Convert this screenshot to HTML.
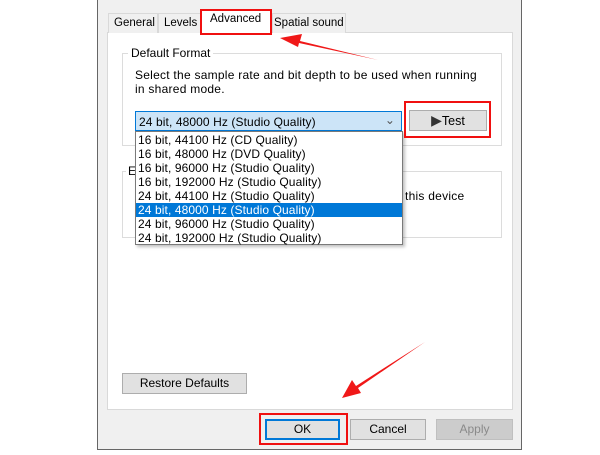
<!DOCTYPE html>
<html><head><style>
body{margin:0;width:600px;height:455px;background:#fff;position:relative;overflow:hidden;font-family:"Liberation Sans",sans-serif;font-size:12px;color:#000}
div{position:absolute;box-sizing:border-box;white-space:nowrap}
.btn{background:#e1e1e1;border:1px solid #adadad;text-align:center;line-height:19px}
.red{border:2px solid #f01010}
.tab{font-size:11.5px}
</style></head><body>
<div style="left:97px;top:-2px;width:425px;height:452px;background:#f0f0f0;border:1px solid #666"></div>
<div style="left:107px;top:32px;width:406px;height:378px;background:#fff;border:1px solid #d9d9d9"></div>
<div class="tab" style="left:108px;top:13px;width:50px;height:20px;border:1px solid #d9d9d9;border-bottom:none;background:#f0f0f0;padding:3px 0 0 5px">General</div>
<div class="tab" style="left:158px;top:13px;width:44px;height:20px;border:1px solid #d9d9d9;border-bottom:none;background:#f0f0f0;padding:3px 0 0 5px">Levels</div>
<div class="tab" style="left:202px;top:10px;width:70px;height:24px;background:#fff;padding:3px 0 0 8px">Advanced</div>
<div class="red" style="left:200px;top:9px;width:72px;height:26px"></div>
<div class="tab" style="left:272px;top:13px;width:74px;height:20px;border:1px solid #d9d9d9;border-bottom:none;background:#f0f0f0;padding:3px 0 0 1px">Spatial sound</div>
<div style="left:122px;top:53px;width:380px;height:93px;border:1px solid #dcdcdc"></div>
<div style="left:128px;top:46px;background:#fff;padding:0 3px">Default Format</div>
<div style="left:135px;top:68px;line-height:14px;font-size:12px;letter-spacing:0.25px">Select the sample rate and bit depth to be used when running<br>in shared mode.</div>
<div style="left:122px;top:171px;width:380px;height:67px;border:1px solid #dcdcdc"></div>
<div style="left:126px;top:164px;background:#fff;padding:0 2px">E</div>
<div style="left:405px;top:189px;font-size:12px;letter-spacing:0.25px">this device</div>
<div style="left:135px;top:111px;width:267px;height:20px;background:#cce4f7;border:1px solid #0078d7;padding:3px 0 0 3px;letter-spacing:0.1px">24 bit, 48000 Hz (Studio Quality)<span style="position:absolute;right:6px;top:1px;color:#555">&#8964;</span></div>
<div style="left:135px;top:131px;width:268px;height:114px;background:#fff;border:1px solid #7a7a7a;box-shadow:2px 2px 3px rgba(0,0,0,.25);line-height:14px;padding-top:1px;letter-spacing:0.1px">
<div style="position:static;padding-left:2px">16 bit, 44100 Hz (CD Quality)</div>
<div style="position:static;padding-left:2px">16 bit, 48000 Hz (DVD Quality)</div>
<div style="position:static;padding-left:2px">16 bit, 96000 Hz (Studio Quality)</div>
<div style="position:static;padding-left:2px">16 bit, 192000 Hz (Studio Quality)</div>
<div style="position:static;padding-left:2px">24 bit, 44100 Hz (Studio Quality)</div>
<div style="position:static;padding-left:2px;background:#0078d7;color:#fff">24 bit, 48000 Hz (Studio Quality)</div>
<div style="position:static;padding-left:2px">24 bit, 96000 Hz (Studio Quality)</div>
<div style="position:static;padding-left:2px">24 bit, 192000 Hz (Studio Quality)</div>
</div>
<div class="btn" style="left:409px;top:110px;width:78px;height:21px;font-size:12.5px"><span style="color:#333;font-size:14px">&#9654;</span>Test</div>
<div class="red" style="left:404px;top:101px;width:87px;height:37px"></div>
<div class="btn" style="left:122px;top:373px;width:125px;height:21px">Restore Defaults</div>
<div class="btn" style="left:265px;top:419px;width:75px;height:21px;border:2px solid #0078d7;line-height:17px">OK</div>
<div class="red" style="left:259px;top:413px;width:89px;height:32px"></div>
<div class="btn" style="left:350px;top:419px;width:76px;height:21px">Cancel</div>
<div class="btn" style="left:436px;top:419px;width:77px;height:21px;background:#ccc;border-color:#bfbfbf;color:#8a8a8a">Apply</div>
<svg style="position:absolute;left:0;top:0" width="600" height="455">
<path d="M378 60 L300 41 L302 34 L280 38 L298 47 L299 43 Z" fill="#f01818"/>
<path d="M425 342 L356 386 L352 380 L342 398 L361 393 L358 388 Z" fill="#f01818"/>
</svg>
</body></html>
